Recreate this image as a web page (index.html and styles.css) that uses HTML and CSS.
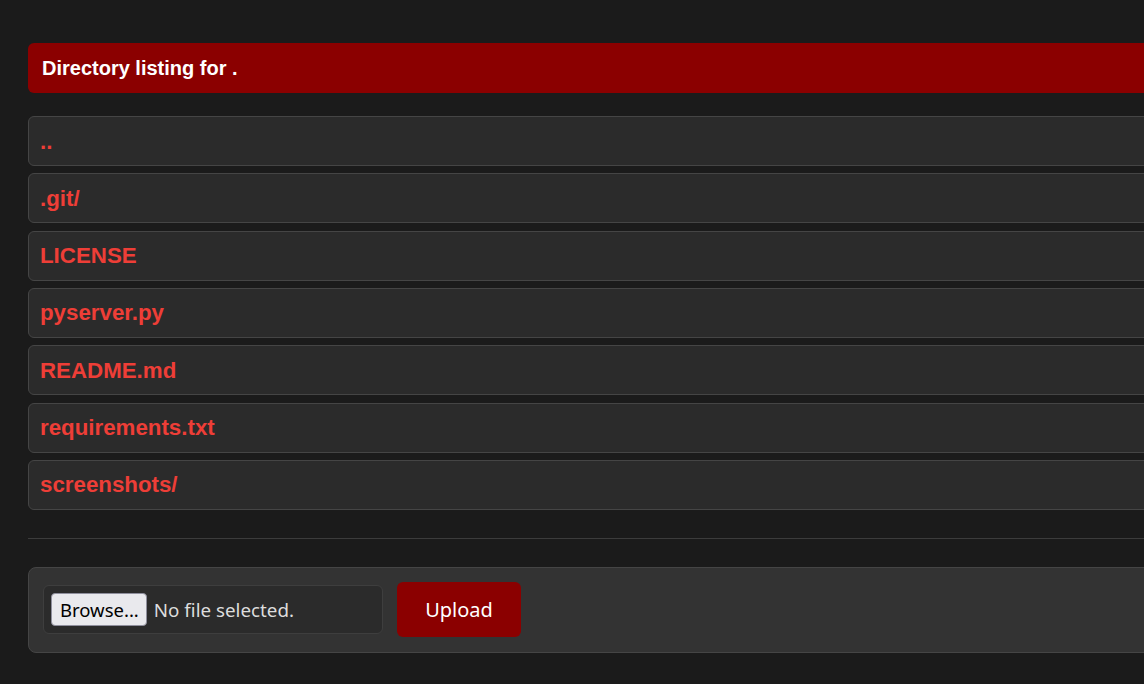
FILE: index.html
```html
<!DOCTYPE html>
<html lang="en">
<head>
<meta charset="utf-8">
<title>Directory listing for .</title>
<link rel="stylesheet" href="styles.css">
</head>
<body>
<main class="page">
  <h1 class="title">Directory listing for .</h1>
  <ul class="listing">
    <li class="entry"><a href="#">..</a></li>
    <li class="entry"><a href="#">.git/</a></li>
    <li class="entry"><a href="#">LICENSE</a></li>
    <li class="entry"><a href="#">pyserver.py</a></li>
    <li class="entry"><a href="#">README.md</a></li>
    <li class="entry"><a href="#">requirements.txt</a></li>
    <li class="entry"><a href="#">screenshots/</a></li>
  </ul>
  <hr class="divider">
  <form class="upload">
    <div class="file-input">
      <span class="browse">Browse...</span>
      <span class="file-status">No file selected.</span>
    </div>
    <button type="button" class="upload-btn">Upload</button>
  </form>
</main>
</body>
</html>
```

FILE: styles.css
```css
html {
  overflow: hidden;
  background: #1b1b1b;
}
body {
  margin: 0;
  background: #1b1b1b;
  font-family: "Liberation Sans", Arial, sans-serif;
}
.page {
  width: 1180px;
  padding: 43px 0 0 28px;
}
.title {
  margin: 0;
  height: 50px;
  box-sizing: border-box;
  padding: 0 14px;
  display: flex;
  align-items: center;
  background: #8b0000;
  color: #ffffff;
  font-size: 20px;
  font-weight: bold;
  border-radius: 6px;
}
.listing {
  list-style: none;
  margin: 23px 0 0;
  padding: 0;
  display: flex;
  flex-direction: column;
  gap: 7.33px;
}
.entry {
  height: 50px;
  box-sizing: border-box;
  display: flex;
  align-items: center;
  padding: 0 11px;
  background: #2b2b2b;
  border: 1px solid #454545;
  border-radius: 6px;
}
.entry a {
  color: #ee3e37;
  text-decoration: none;
  font-weight: bold;
  font-size: 22.3px;
  padding-top: 1px;
}
.divider {
  margin: 28px 0 0;
  border: 0;
  border-top: 1px solid #3c3c3c;
  height: 0;
}
.upload {
  margin-top: 28px;
  height: 86px;
  box-sizing: border-box;
  display: flex;
  align-items: center;
  gap: 14px;
  padding: 0 14px;
  background: #333333;
  border: 1px solid #454545;
  border-radius: 8px;
  font-family: "Noto Sans", "Open Sans", sans-serif;
}
.file-input {
  width: 340px;
  height: 49px;
  box-sizing: border-box;
  display: flex;
  align-items: center;
  gap: 7px;
  padding: 0 7px;
  background: #2b2b2b;
  border: 1px solid #3e3e3e;
  border-radius: 6px;
}
.browse {
  height: 33px;
  box-sizing: border-box;
  display: flex;
  align-items: center;
  padding: 0 7px 0 8px;
  background: #e9e9ed;
  border: 1px solid #8f8f9d;
  border-radius: 4px;
  color: #000;
  font-size: 18.5px;
}
.file-status {
  color: #dddddd;
  font-size: 18.8px;
}
.upload-btn {
  width: 124px;
  height: 55px;
  border: 0;
  border-radius: 6px;
  background: #8b0000;
  color: #ffffff;
  font-family: "Noto Sans", "Open Sans", sans-serif;
  font-size: 20px;
  padding: 0;
}
```
